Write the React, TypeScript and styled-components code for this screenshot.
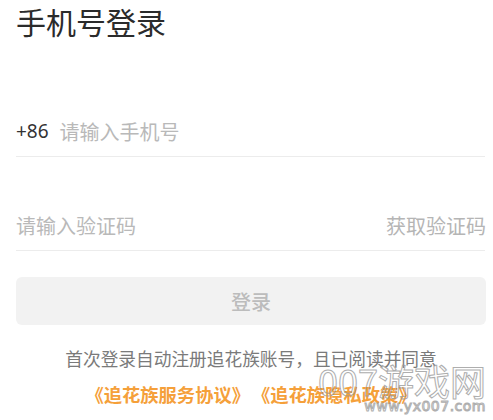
import styled, { createGlobalStyle } from 'styled-components';

const GlobalStyle = createGlobalStyle`
  html, body {
    margin: 0;
    padding: 0;
    background: #ffffff;
  }
  body {
    font-family: 'Noto Sans CJK SC', 'Noto Sans', sans-serif;
  }
`;

const Page = styled.div`
  position: relative;
  width: 493px;
  height: 420px;
  overflow: hidden;
  padding: 0 8px 0 16px;
  box-sizing: border-box;
`;

const Title = styled.h1`
  margin: 0;
  font-size: 30px;
  line-height: 42px;
  font-weight: 400;
  color: #2b2b2b;
`;

const Field = styled.div<{ top: number }>`
  display: flex;
  align-items: center;
  height: 50px;
  margin-top: ${(p) => p.top}px;
  border-bottom: 1px solid #ececec;
  font-size: 20px;
`;

const Prefix = styled.span`
  color: #333;
  font-family: 'Noto Sans', sans-serif;
  font-size: 19px;
  margin-right: 11px;
`;

const Placeholder = styled.span`
  flex: 1;
  color: #b9b9b9;
`;

const CodeLink = styled.span`
  color: #b5b5b5;
  margin-right: -1px;
`;

const LoginButton = styled.button`
  display: block;
  width: 470px;
  height: 48px;
  margin-top: 26px;
  border: none;
  border-radius: 6px;
  background: #f2f2f2;
  color: #bcbcbc;
  font-family: inherit;
  font-size: 20px;
  font-weight: 500;
`;

const Notice = styled.div`
  margin-top: 19px;
  width: 470px;
  text-align: center;
`;

const NoticeLine = styled.p`
  margin: 0;
  font-size: 17.7px;
  line-height: 28px;
  color: #7a7a7a;
`;

const Links = styled.p`
  display: flex;
  justify-content: center;
  gap: 2px;
  margin: 8px 0 0;
  font-size: 18.3px;
  line-height: 28px;
  font-weight: 700;
  color: #f5a03a;
`;

const Watermark = styled.div`
  position: absolute;
  right: 7px;
  bottom: 7px;
  display: flex;
  flex-direction: column;
  align-items: flex-end;
  color: transparent;
  -webkit-text-stroke: 1px #9a9a9a;
  opacity: 0.8;
  pointer-events: none;
`;

const WatermarkBig = styled.span`
  font-size: 36px;
  line-height: 38px;
  font-weight: 400;
`;

const WatermarkSmall = styled.span`
  font-family: 'DejaVu Sans', sans-serif;
  font-size: 14px;
  line-height: 14px;
  letter-spacing: 0.5px;
`;

export default function App() {
  return (
    <Page>
      <GlobalStyle />
      <Title>手机号登录</Title>
      <Field top={64}>
        <Prefix>+86</Prefix>
        <Placeholder>请输入手机号</Placeholder>
      </Field>
      <Field top={43}>
        <Placeholder>请输入验证码</Placeholder>
        <CodeLink>获取验证码</CodeLink>
      </Field>
      <LoginButton>登录</LoginButton>
      <Notice>
        <NoticeLine>首次登录自动注册追花族账号，且已阅读并同意</NoticeLine>
        <Links>
          <span>《追花族服务协议》</span>
          <span>《追花族隐私政策》</span>
        </Links>
      </Notice>
      <Watermark>
        <WatermarkBig>007游戏网</WatermarkBig>
        <WatermarkSmall>www.yx007.com</WatermarkSmall>
      </Watermark>
    </Page>
  );
}
